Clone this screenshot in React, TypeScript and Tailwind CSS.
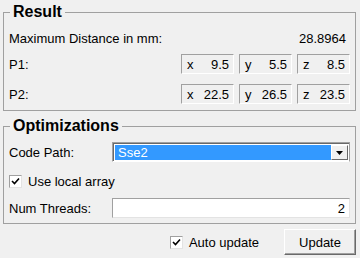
import React from "react";

// Check mark for the classic checkbox
const CheckBox = () => (
    <div className="w-[13px] h-[13px] bg-white border border-t-[#a0a0a0] border-l-[#a0a0a0] border-b-[#e3e3e3] border-r-[#e3e3e3] flex items-center justify-center">
        <svg width="9" height="9" viewBox="0 0 9 9">
            <path d="M1 4 L3.5 6.5 L8 1.5" stroke="#000" strokeWidth="1.6" fill="none" />
        </svg>
    </div>
);

const CoordBox = ({ axis, value }: { axis: string; value: string }) => (
    <div className="w-[53px] h-5 flex items-center justify-between pl-[5px] pr-[4px] border border-t-[#a0a0a0] border-l-[#a0a0a0] border-b-white border-r-white">
        <span>{axis}</span>
        <span>{value}</span>
    </div>
);

const App = () => {
    const p1 = [
        { axis: "x", value: "9.5" },
        { axis: "y", value: "5.5" },
        { axis: "z", value: "8.5" },
    ];
    const p2 = [
        { axis: "x", value: "22.5" },
        { axis: "y", value: "26.5" },
        { axis: "z", value: "23.5" },
    ];

    return (
        <div
            className="w-[360px] h-[258px] bg-[#f0f0f0] text-black text-[13px] leading-none pl-[3px] pr-[4px] overflow-hidden"
            style={{ fontFamily: '"Liberation Sans", Arial, sans-serif' }}
        >
            {/* Result group */}
            <fieldset className="mt-[3px] border border-[#a0a0a0] pl-[5px] pr-[5px] pt-[7px] pb-[6px]">
                <legend className="ml-[1px] px-[3px] text-[16px] leading-[18px] font-bold">Result</legend>
                <div className="h-5 flex items-center justify-between">
                    <span>Maximum Distance in mm:</span>
                    <span className="pr-[4px]">28.8964</span>
                </div>
                <div className="mt-[6px] h-5 flex items-center">
                    <span>P1:</span>
                    <div className="ml-auto flex gap-[5px]">
                        {p1.map((c) => (
                            <CoordBox key={c.axis} axis={c.axis} value={c.value} />
                        ))}
                    </div>
                </div>
                <div className="mt-[10px] h-5 flex items-center">
                    <span>P2:</span>
                    <div className="ml-auto flex gap-[5px]">
                        {p2.map((c) => (
                            <CoordBox key={c.axis} axis={c.axis} value={c.value} />
                        ))}
                    </div>
                </div>
            </fieldset>

            {/* Optimizations group */}
            <fieldset className="mt-[6px] border border-[#a0a0a0] pl-[5px] pr-[5px] pt-[7px] pb-[5px]">
                <legend className="ml-[1px] px-[3px] text-[16px] leading-[18px] font-bold">Optimizations</legend>
                <div className="h-5 flex items-center">
                    <span className="w-[103px]">Code Path:</span>
                    <div className="flex-1 h-5 flex border border-t-[#a0a0a0] border-l-[#a0a0a0] border-b-white border-r-[#a0a0a0] bg-white">
                        <div className="flex-1 flex border-t border-l border-[#696969] p-[1px]">
                            <div className="flex-1 bg-[#3399ff] text-white flex items-center pl-[3px]">Sse2</div>
                            <div className="w-[17px] flex items-center justify-center bg-[#f0f0f0] border border-t-white border-l-white border-b-[#696969] border-r-[#696969]">
                                <svg width="7" height="4" viewBox="0 0 7 4">
                                    <path d="M0 0 H7 L3.5 4 Z" fill="#000" />
                                </svg>
                            </div>
                        </div>
                    </div>
                </div>
                <div className="mt-[9px] h-5 flex items-center gap-[6px]">
                    <CheckBox />
                    <span>Use local array</span>
                </div>
                <div className="mt-[7px] h-5 flex items-center">
                    <span className="w-[103px]">Num Threads:</span>
                    <div className="flex-1 h-5 flex items-center justify-end pr-[4px] bg-white border border-t-[#a0a0a0] border-l-[#a0a0a0] border-b-[#e3e3e3] border-r-[#e3e3e3]">
                        2
                    </div>
                </div>
            </fieldset>

            {/* Bottom row */}
            <div className="mt-[5px] flex items-center justify-end">
                <CheckBox />
                <span className="ml-[6px]">Auto update</span>
                <button className="ml-[25px] w-[72px] h-[26px] bg-[#f0f0f0] border border-t-white border-l-white border-b-[#696969] border-r-[#696969] shadow-[inset_-1px_-1px_0_#a0a0a0] text-[13px]">
                    Update
                </button>
            </div>
        </div>
    );
};

export default App;
